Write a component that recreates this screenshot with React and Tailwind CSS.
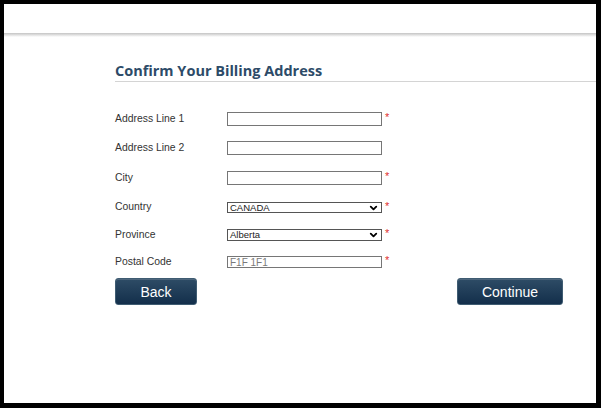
import { ChevronDown } from 'lucide-react'

const rows = [
  { label: 'Address Line 1', type: 'text', required: true, mt: 'mt-[30px]', h: 'h-[14px]' },
  { label: 'Address Line 2', type: 'text', required: false, mt: 'mt-[15px]', h: 'h-[14px]' },
  { label: 'City', type: 'text', required: true, mt: 'mt-[16px]', h: 'h-[14px]' },
  { label: 'Country', type: 'select', value: 'CANADA', required: true, mt: 'mt-[17px]', h: 'h-[11px]' },
  { label: 'Province', type: 'select', value: 'Alberta', required: true, mt: 'mt-[16px]', h: 'h-[12px]' },
  { label: 'Postal Code', type: 'text', placeholder: 'F1F 1F1', required: true, mt: 'mt-[15px]', h: 'h-[12px]' }
]

const Field = ({ row }) => {
  if (row.type === 'select') {
    return (
      <div className={`relative w-[155px] ${row.h} border border-[#555] bg-white flex items-center`}>
        <span className="pl-[2px] text-[9.5px] leading-none text-[#222]">{row.value}</span>
        <ChevronDown className="absolute right-[2px] top-1/2 -translate-y-1/2 text-black" size={11} strokeWidth={4} />
      </div>
    )
  }
  return (
    <input
      type="text"
      placeholder={row.placeholder}
      className={`w-[155px] ${row.h} border border-[#767676] bg-white px-[2px] text-[10px] leading-none text-[#222] placeholder:text-[#7a7a7a] outline-none`}
    />
  )
}

const Button = ({ children, width }) => (
  <button
    className={`${width} h-[27px] rounded-[3px] border border-[#3f5c72] bg-gradient-to-b from-[#2e4c66] to-[#132f4b] text-white text-[14px] leading-none shadow-[inset_0_1px_0_rgba(255,255,255,0.15)]`}
  >
    {children}
  </button>
)

const App = () => {
  return (
    <div className="w-[601px] h-[408px] bg-black pt-[4px] pl-[4px] pr-[5px] pb-[5px] font-['Liberation_Sans',Arial,sans-serif]">
      <div className="w-full h-full bg-white flex flex-col">
        <div className="h-[29px] shrink-0" />
        <div className="h-[4px] shrink-0 bg-gradient-to-b from-[#c4c4c4] to-white" />

        <div className="ml-[111px] mt-[26px]">
          <h1 className="font-['Open_Sans',sans-serif] font-bold text-[14.5px] leading-[16px] text-[#2d4b68] pb-[2px] border-b border-[#d4d4d4]">
            Confirm Your Billing Address
          </h1>
        </div>

        <div className="ml-[111px] w-[448px]">
          {rows.map((row, i) => (
            <div key={i} className={`flex items-center ${row.mt}`}>
              <span className="w-[112px] text-[10.4px] leading-none text-[#333]">{row.label}</span>
              <Field row={row} />
              {row.required && (
                <span className="ml-[3px] text-[11px] leading-none text-[#e0302f] -mt-[3px]">*</span>
              )}
            </div>
          ))}

          <div className="flex justify-between mt-[10px]">
            <Button width="w-[82px]">Back</Button>
            <Button width="w-[106px]">Continue</Button>
          </div>
        </div>
      </div>
    </div>
  )
}

export default App
